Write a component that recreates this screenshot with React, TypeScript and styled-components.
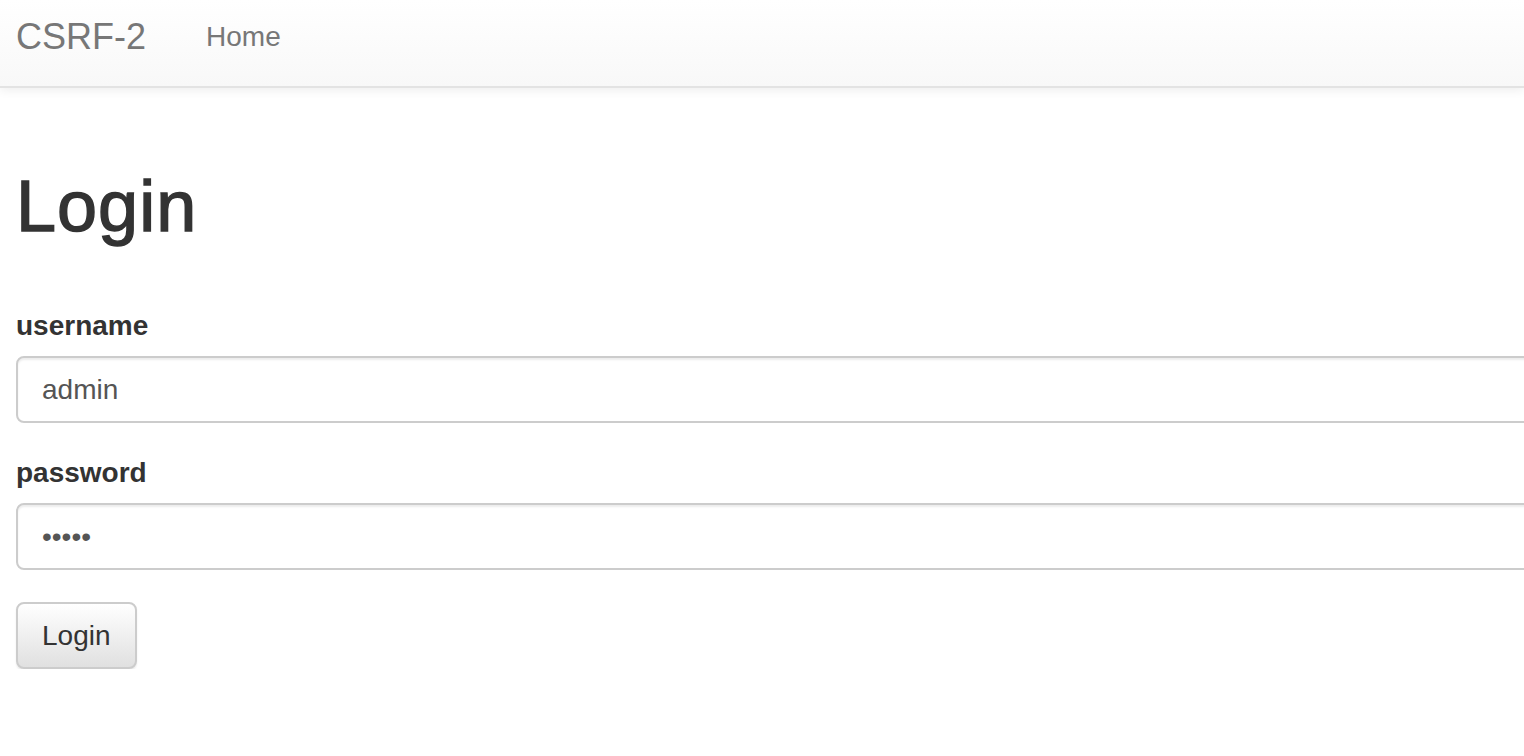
import React from "react";
import styled, { createGlobalStyle } from "styled-components";

const GlobalStyle = createGlobalStyle`
  html, body {
    margin: 0;
    padding: 0;
    background: #fff;
    overflow: hidden;
  }
  body {
    font-family: "Liberation Sans", Arial, Helvetica, sans-serif;
    font-size: 28px;
    line-height: 40px;
    color: #333;
  }
  * {
    box-sizing: border-box;
  }
`;

const App = () => {
  return (
    <>
      <GlobalStyle />
      <Navbar>
        <Brand href="#">CSRF-2</Brand>
        <NavLink href="#">Home</NavLink>
      </Navbar>
      <Container>
        <Title>Login</Title>
        <Form onSubmit={(e) => e.preventDefault()}>
          <FormGroup>
            <Label htmlFor="username">username</Label>
            <Input id="username" type="text" defaultValue="admin" />
          </FormGroup>
          <FormGroup>
            <Label htmlFor="password">password</Label>
            <Input id="password" type="password" defaultValue="admin" />
          </FormGroup>
          <Button type="submit">Login</Button>
        </Form>
      </Container>
    </>
  );
};

export default App;

const Navbar = styled.nav`
  display: flex;
  align-items: flex-start;
  height: 88px;
  padding: 17px 0 0 16px;
  background-image: linear-gradient(to bottom, #ffffff 0%, #f8f8f8 100%);
  border-bottom: 2px solid #e3e3e3;
  box-shadow: inset 0 2px 0 rgba(255, 255, 255, 0.15),
    0 2px 10px rgba(0, 0, 0, 0.075);
`;

const Brand = styled.a`
  font-size: 36px;
  line-height: 40px;
  color: #777;
  text-decoration: none;
  padding-right: 30px;
`;

const NavLink = styled.a`
  font-size: 28px;
  line-height: 40px;
  color: #777;
  text-decoration: none;
  padding: 0 30px;
`;

const Container = styled.div`
  padding: 0 0 0 16px;
  width: 1620px;
`;

const Title = styled.h1`
  font-size: 72px;
  font-weight: 500;
  line-height: 1.1;
  letter-spacing: 1px;
  color: #333;
  -webkit-text-stroke: 1.4px #333;
  margin: 79px 0 60px;
`;

const Form = styled.form`
  margin: 0;
`;

const FormGroup = styled.div`
  margin-bottom: 30px;
`;

const Label = styled.label`
  display: block;
  font-weight: bold;
  font-size: 28px;
  line-height: 40px;
  margin-bottom: 10px;
`;

const Input = styled.input`
  display: block;
  width: 100%;
  height: 67px;
  padding: 12px 24px;
  font-family: inherit;
  font-size: 28px;
  line-height: 40px;
  color: #555;
  background: #fff;
  border: 2px solid #ccc;
  border-radius: 8px;
  box-shadow: inset 0 2px 2px rgba(0, 0, 0, 0.075);
  outline: none;
`;

const Button = styled.button`
  display: inline-block;
  height: 67px;
  margin-top: 2px;
  padding: 12px 24px;
  font-family: inherit;
  font-size: 28px;
  line-height: 40px;
  color: #333;
  background-image: linear-gradient(to bottom, #ffffff 0%, #e0e0e0 100%);
  border: 2px solid #ccc;
  border-radius: 8px;
  box-shadow: inset 0 2px 0 rgba(255, 255, 255, 0.15),
    0 2px 2px rgba(0, 0, 0, 0.075);
  cursor: pointer;
`;
